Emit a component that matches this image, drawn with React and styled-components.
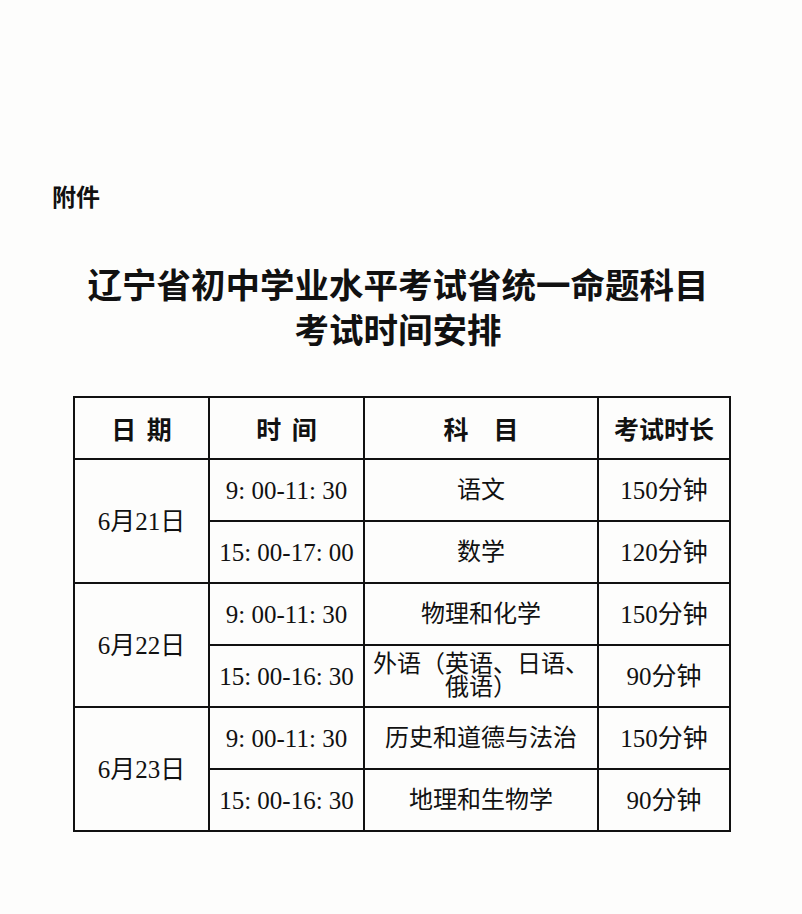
import React from "react";
import styled, { createGlobalStyle } from "styled-components";

const Global = createGlobalStyle`
  html, body { margin: 0; padding: 0; background: #fdfdfc; }
  body { width: 802px; height: 914px; overflow: hidden; }
`;

const Page = styled.div`
  width: 802px;
  height: 914px;
  box-sizing: border-box;
  padding-top: 181px;
  color: #111;
  font-family: "Liberation Serif", "Noto Sans CJK SC", serif;
`;

const Label = styled.div`
  margin-left: 52px;
  font-family: "Noto Sans CJK SC", sans-serif;
  font-weight: 700;
  font-size: 24px;
  line-height: 29px;
`;

const Title = styled.h1`
  margin: 51px 0 0;
  padding-right: 6px;
  text-align: center;
  font-family: "Noto Sans CJK SC", sans-serif;
  font-weight: 700;
  font-size: 34.5px;
  line-height: 45px;
`;

const Table = styled.table`
  margin: 45px 0 0 73px;
  border-collapse: collapse;
  table-layout: fixed;
  width: 656px;
  border: 2px solid #111;
`;

const Cell = styled.td`
  border: 2px solid #111;
  height: 60px;
  padding: 0;
  text-align: center;
  vertical-align: middle;
  font-size: 25px;
  line-height: 23px;
  font-family: ${(p) =>
    p.$head
      ? `"Noto Sans CJK SC", sans-serif`
      : `"Liberation Serif", "Noto Sans CJK SC", serif`};
  font-weight: ${(p) => (p.$head ? 700 : 400)};
  word-spacing: ${(p) => (p.$head ? "5px" : "0")};
  white-space: pre-wrap;
`;

const Subject = styled.span`
  display: inline-block;
  padding: 0 6px;
  font-size: 24px;
`;

const rows = [
  { date: "6月21日", slots: [["9: 00-11: 30", "语文", "150分钟"], ["15: 00-17: 00", "数学", "120分钟"]] },
  { date: "6月22日", slots: [["9: 00-11: 30", "物理和化学", "150分钟"], ["15: 00-16: 30", "外语（英语、日语、俄语）", "90分钟"]] },
  { date: "6月23日", slots: [["9: 00-11: 30", "历史和道德与法治", "150分钟"], ["15: 00-16: 30", "地理和生物学", "90分钟"]] },
];

export default function App() {
  return (
    <Page>
      <Global />
      <Label>附件</Label>
      <Title>
        辽宁省初中学业水平考试省统一命题科目
        <br />
        考试时间安排
      </Title>
      <Table>
        <colgroup>
          <col style={{ width: 135 }} />
          <col style={{ width: 155 }} />
          <col style={{ width: 234 }} />
          <col style={{ width: 132 }} />
        </colgroup>
        <thead>
          <tr>
            <Cell as="th" $head>日 期</Cell>
            <Cell as="th" $head>时 间</Cell>
            <Cell as="th" $head>{"科　目"}</Cell>
            <Cell as="th" $head>考试时长</Cell>
          </tr>
        </thead>
        <tbody>
          {rows.map((r) =>
            r.slots.map((s, i) => (
              <tr key={r.date + i}>
                {i === 0 && <Cell rowSpan={2}>{r.date}</Cell>}
                <Cell>{s[0]}</Cell>
                <Cell>
                  <Subject>{s[1]}</Subject>
                </Cell>
                <Cell>{s[2]}</Cell>
              </tr>
            ))
          )}
        </tbody>
      </Table>
    </Page>
  );
}
